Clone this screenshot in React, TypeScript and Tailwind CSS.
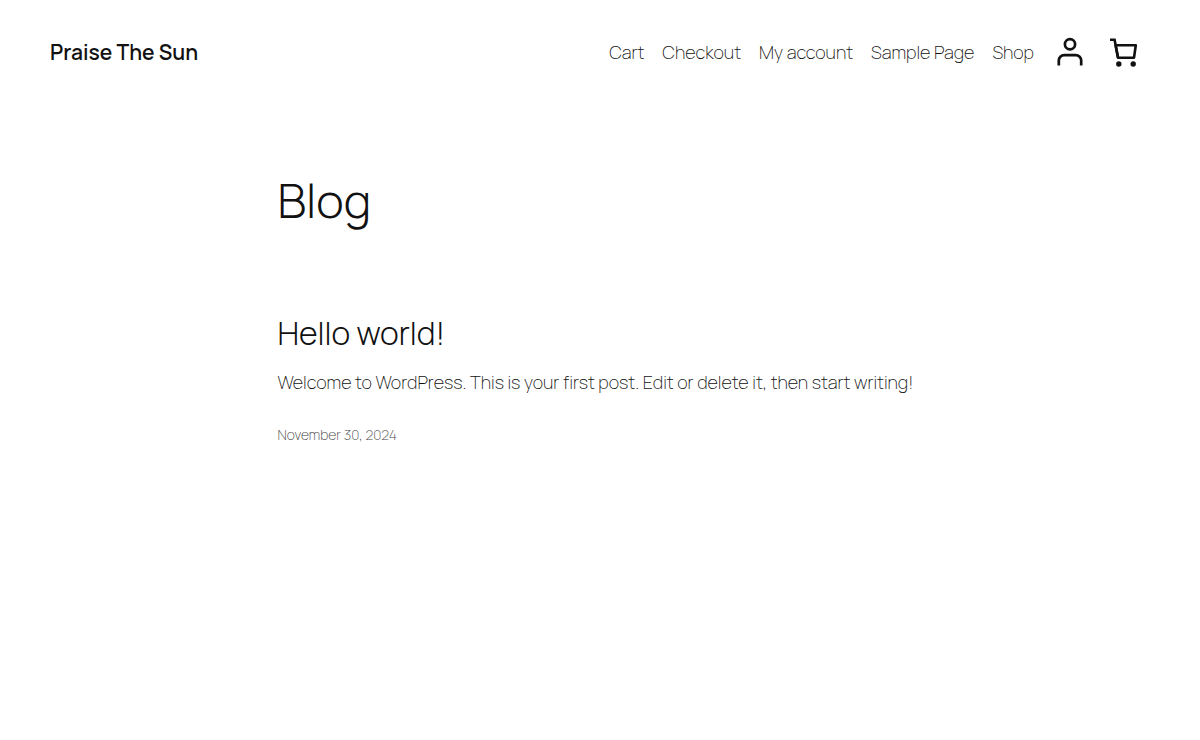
const navItems = ["Cart", "Checkout", "My account", "Sample Page", "Shop"];

function AccountIcon() {
  return (
    <svg
      className="size-8"
      viewBox="0 0 32 32"
      fill="none"
      stroke="currentColor"
      strokeWidth="2.7"
      aria-hidden="true"
    >
      <circle cx="16" cy="8.3" r="5.1" />
      <path d="M4.8 29.6v-5a5.4 5.4 0 0 1 5.4-5.4h11.6a5.4 5.4 0 0 1 5.4 5.4v5" />
    </svg>
  );
}

function CartIcon() {
  return (
    <svg
      className="size-8"
      viewBox="0 0 32 32"
      fill="none"
      stroke="currentColor"
      strokeWidth="2.6"
      aria-hidden="true"
    >
      <path d="M2 3.8h4.6l3.4 17.8" />
      <path d="M7.6 9.2h20.2l-1.8 12.6H10z" strokeLinejoin="round" />
      <circle cx="10.8" cy="28" r="2.7" fill="currentColor" stroke="none" />
      <circle cx="25.2" cy="28" r="2.7" fill="currentColor" stroke="none" />
    </svg>
  );
}

export default function App() {
  return (
    <div className="min-h-screen bg-white font-['Manrope','Inter',sans-serif] font-extralight text-[#111111]">
      <header className="flex items-center justify-between py-8 pr-[52px] pl-[50px]">
        <a href="#" className="text-[21px] leading-10 font-semibold">
          Praise The Sun
        </a>
        <div className="flex items-center gap-4">
          <nav aria-label="Main">
            <ul className="flex items-center gap-[18px] text-lg leading-10">
              {navItems.map((item) => (
                <li key={item}>
                  <a href="#">{item}</a>
                </li>
              ))}
            </ul>
          </nav>
          <div className="flex items-center gap-[10px]">
            <a href="#" aria-label="My account" className="p-1">
              <AccountIcon />
            </a>
            <button type="button" aria-label="Cart" className="px-2">
              <CartIcon />
            </button>
          </div>
        </div>
      </header>

      <main className="mx-auto max-w-[645px] pt-[68px]">
        <h1 className="text-[47px] leading-[56px] font-light">Blog</h1>
        <article className="pt-[87px]">
          <h2 className="text-[32px] leading-9 font-light">
            <a href="#">Hello world!</a>
          </h2>
          <p className="pt-[19px] text-lg leading-6">
            Welcome to WordPress. This is your first post. Edit or delete it, then start writing!
          </p>
          <time dateTime="2024-11-30" className="block pt-[31px] text-sm leading-5 text-[#444444]">
            November 30, 2024
          </time>
        </article>
      </main>
    </div>
  );
}
